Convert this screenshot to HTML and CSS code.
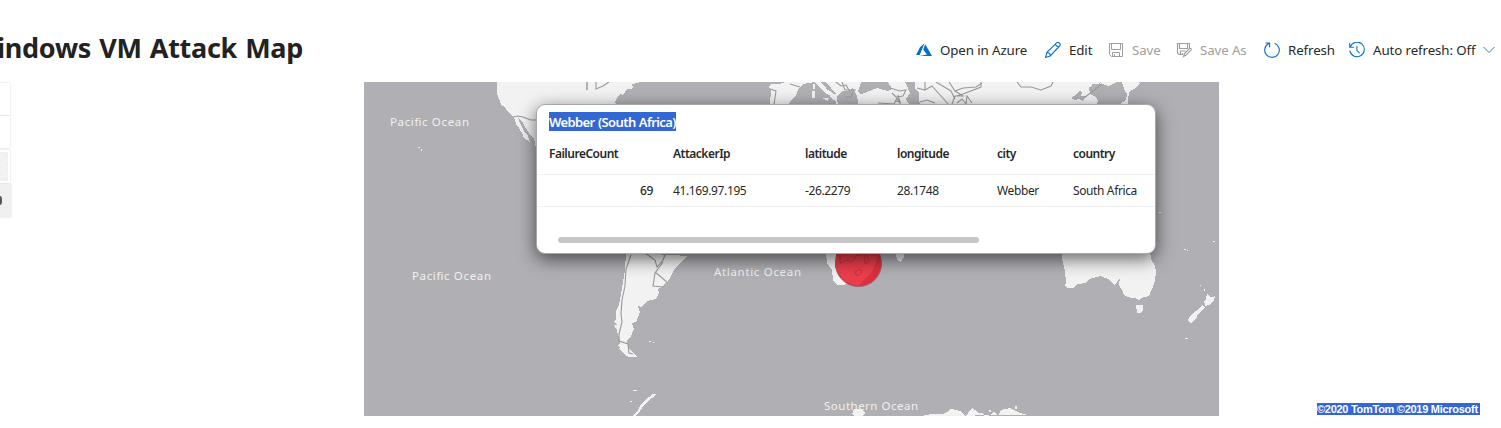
FILE: index.html
```html
<!DOCTYPE html>
<html lang="en">
<head>
<meta charset="utf-8">
<title>Windows VM Attack Map</title>
<link rel="stylesheet" href="styles.css">
</head>
<body>
<header class="header">
  <h1 class="title">Windows VM Attack Map</h1>
  <nav class="toolbar">
    <a class="tool azure"><svg class="icon" viewBox="0 0 16 16"><path fill="#0072c6" d="M8.600 1.300 4 5.200 0 13h3.700zM9.200 2.300 7.200 7.800l3.800 4.700L3.800 14H16z"/></svg><span>Open in Azure</span></a>
    <a class="tool edit"><svg class="icon" viewBox="0 0 16 16"><path fill="none" stroke="#0f72c4" stroke-width="1.100" d="M.6 15.400l1.300-5L11.600.9c1-.8 2.200-.5 3 .3.800.8.800 2 0 2.800L5.200 13.900zM10.200 2.300l3.200 3.200M2 10.500c1.900 0 3.200 1.300 3.200 3.200"/></svg><span>Edit</span></a>
    <a class="tool save off"><svg class="icon" viewBox="0 0 16 16"><path fill="none" stroke="#a19f9d" d="M1.500 1.500h13v13H3.500l-2-2zM3.500 1.500v6h9v-6M4.500 14.500v-4h7v4M6.500 12v2.500"/></svg><span>Save</span></a>
    <a class="tool saveas off"><svg class="icon" viewBox="0 0 16 16"><path fill="none" stroke="#a19f9d" stroke-width="1.150" d="M7 12.500H3L1.500 11V1.500h12V6M3.500 1.500v5h8v-5M4.500 12.500v-3.500h5M6.500 11v1.500M7.500 14.500l1-3L13.500 6.500c1.200-.6 2.200.6 1.500 1.600l-5 5z"/></svg><span>Save As</span></a>
    <a class="tool refresh"><svg class="icon" viewBox="0 0 16 16"><path fill="none" stroke="#0f72c4" stroke-width="1.150" d="M10.500 1.200a7.300 7.300 0 1 1-5.700.3M1.600 1h4v4.200"/></svg><span>Refresh</span></a>
    <a class="tool auto"><svg class="icon" viewBox="0 0 16 16"><path fill="none" stroke="#0f72c4" stroke-width="1.100" d="M1.200 4.800A7.300 7.300 0 1 1 .8 8.600M.7 1v4.200h4.200M7.900 4v4.600l2.800 2.500"/></svg><span>Auto refresh: Off</span><svg class="chevron" viewBox="0 0 12 8"><path fill="none" stroke="#3b7db0" d="M.5 1 6 6.500 11.500 1"/></svg></a>
  </nav>
</header>
<main class="content">
  <div class="controls">
    <div class="ctl"></div>
    <div class="ctl"></div>
    <div class="ctl style"><svg viewBox="0 0 8 29"><path fill="none" stroke="#f8f8f8" stroke-width=".7" d="M0 3l8 5M0 12l8-4M0 17l8 5M2 2v25M5 10v15M0 24h8"/></svg></div>
    <div class="ctl last"><i class="knob"></i></div>
  </div>
  <section class="map">
    <svg class="world" viewBox="364 82 855 334">
      <rect class="sea" x="364" y="82" width="855" height="334"/>
      <g class="land" shape-rendering="crispEdges">
        <path d="M497 82v10l1 5 2 4 1 4 4 2 3 5 3 3 3 2 2 7 3 4 3 5 2 5 6 4-2-6-4-5-3-6-3-7 4 3 3 6 4 6 5 6 2 9 20 20h50l-10-30v-20l21-11-2-5 2-4 3-4 3 1 4-6h4l2-2-1-3 6-1 2-2z"/>
        <path d="M785 82l-6 2h-8l-2 3 2 4-1 13 2 6h323l3-9-3-4 7-2 3-4-4-3-6 1-4-2 2-3 5 2 2-4 4 2 3 3 8-4 8-5z"/>
        <path d="M1089 96l5-1 3 3v5l3 4h-7l-1-5zM1101 82l-2 4h8l3-3 6-1zM1122 82l2 7 3 5-1 6-7 5-1 5 9-1 1-9 1-8 5-3 6-6-3-1zM867 252h22l5 2h9v5l-3 2-3-3v-4z"/>
        <path d="M626 252l-1 18-2 12-2 12-2 11-3 6 0 8-2 3 3 3-3 0 3 5 1 5 2 5 1 6-2 3 5 5 5 3 8 0-5-5-4-5-1-6 4-5 3-7-2-6 4-1 4-10-2-6 3 1 6-6 9-2 3-6-1-4 7-3 5-8 5-10 6-6 7-6z"/>
        <path d="M624 345l-4-2-2 3 4 2zM627 352l3 1 5 2h-7zM649 341h2v1h-2zM653 342h1v1h-1z"/>
        <path d="M826 252l1 11 5 7 1 10 4 5h6l8-2 15-9 12-22zM895 252l3 9 3 1 3-5 1-5z"/>
        <path d="M1062 252l0 7 3 12 1 11-1 4 3 2h5l5-4 7-1 4-4 12-3 9 4 4 5 3-3 3-4-1 7 3 5 2 5 7 3 4 0 4 2 5-3 5-1 3-7 3-8 1-9-1-6-4-7-1-8zM1136 305h7l0 5-2 3h-4zM1207 293l3 4 4 0 2-3-2 6-5 5-4 1 0-3-2-1 3-3zM1202 305l3 2-7 7-2 5-5 4-3-2 1-4 7-6zM1185 338h3v1h-3zM1204 289h1v2h-1zM1200 285h1v1h-1zM1184 249h2v1h-2zM1213 241h2v1h-2zM1187 250h1v1h-1zM1159 212h2v1h-2z"/>
        <path d="M656 394h-3l-8 6-5 6-3 6-5 4h3l5-5 4-6 8-7zM633 390h4v1h-4zM630 401h2v1h-2zM852 414l2-5h8l3 4-2 3h-9zM922 416l9-2h12l4-2 4-3 6 1 5 2 3 4 3-3 4-5 3 2 3 3 5 0 2 4 5-2 4-3 4 4 3-6 9-2 6 3 7 3 6 1zM989 410h2v2h-2zM1015 406h2v3h-2zM418 147h2v1h-2zM421 149h1v2h-1z"/>
      </g>
      <g class="water" shape-rendering="crispEdges">
        <path d="M586 82h2v8h-2zM787 107l4-7 5-5 3-7 4-4 12-2 5 6 6 6 8 2 3 9zM821 82h5l10 12-4 1-6-7zM836 97l6-6 7 0 4-3 4 8 2 11h-20zM858 92l3-10h27l4 7-4 2-11-3-10 4-6 2zM905 82h10l0 6 4 5 0 6 1 5-10 2-4-7 4-6-3-7zM1100 106l-4-9-6-3-1-7 5 0-2-3 10 0 7 2 7 2 3 5-4 5-4 3-3 6zM1071 98l6-4 2-3 3 1-1 4 5 0-3 5-4-2-4 1z"/>
      </g>
      <path class="land" shape-rendering="crispEdges" d="M813 84h2v5h-2zM812 91h3v7h-3zM823 88l7 3 7 7-1 3-5-3-4-7zM822 98h7l-1 3z"/>
      <path class="border" d="M513 117l5-1 5 1 8 3h6M596 82v7l7-3 6-4M770 89l6 2-2 14M790 84l10 3M836 82l5 4 5-1 4 7M842 82l3 8 11 0M845 97h6l2-5M890 88l10 3 6-1-3 6-7 1-4-4M898 95l2 7-4-1M878 103l16 1 3-6 4 7M925 82v8l-8-2M925 90l7-4 17 19M936 82l15 9 4 8M949 82l6 9 8-3 13-1 6-4M953 97l10-3 18-7V82M952 104l3-8 8 0-8-5M957 103l5-4 4 5 1-8 5 7M920 102l7-2 8 3M1017 82l4 5 10 0 10 3 10-4 2-4M1084 98l18-14M631 255l-5 14-1 17-3 14-1 14 1 8-3 12v7l9 3 1 9 4 1M645 253l10 7 2 7 6-7 2-5-6-2M663 262l-8 11-2 13 10 1 4-5-12-10"/>
      <g class="labels">
        <text x="390" y="126" textLength="79">Pacific Ocean</text>
        <text x="412" y="280" textLength="79">Pacific Ocean</text>
        <text x="714" y="276" textLength="87">Atlantic Ocean</text>
        <text x="824" y="410" textLength="94">Southern Ocean</text>
      </g>
      <circle class="hit" cx="858.500" cy="263.500" r="23"/>
      <path class="hitland" d="M836 254h43l-7 18-14 14-14-5-9-14z"/>
      <path class="hitline" d="M840 254v9l7-3 5 2 5-7h4M865 254v10l4-3-2-7M855 272l5-3 2 3-5 4z"/>
    </svg>
    <article class="popup">
      <h2 class="popup-title"><mark>Webber (South Africa)</mark></h2>
      <div class="row head"><span>FailureCount</span><span>AttackerIp</span><span>latitude</span><span>longitude</span><span>city</span><span>country</span></div>
      <div class="row"><span class="count">69</span><span>41.169.97.195</span><span>-26.2279</span><span>28.1748</span><span>Webber</span><span>South Africa</span></div>
      <div class="scroll"></div>
    </article>
  </section>
  <footer class="credit">©2020 TomTom ©2019 Microsoft</footer>
</main>
</body>
</html>
```
FILE: styles.css
```css
* { box-sizing: border-box; }
body { margin: 0; width: 1501px; height: 428px; overflow: hidden; background: #fff; color: #292827; font-family: "Noto Sans", "Open Sans", sans-serif; }
.header { display: flex; justify-content: space-between; height: 82px; padding-top: 28px; }
.title { display: flex; justify-content: flex-end; width: 303px; margin: 0; font-size: 27px; line-height: 40px; font-weight: 700; letter-spacing: -0.300px; word-spacing: 1.500px; white-space: nowrap; color: #222; }
.toolbar { display: flex; width: 585px; height: 44px; align-items: center; }
.tool { display: flex; align-items: center; gap: 8px; flex: none; height: 18px; font-size: 13.300px; line-height: 18px; letter-spacing: -0.100px; white-space: nowrap; }
.icon { width: 16px; height: 16px; flex: none; }
.azure { width: 129px; }
.edit { width: 63px; }
.save { width: 68px; }
.saveas { width: 88px; }
.refresh { width: 85px; }
.auto { width: 152px; }
.off { color: #a19f9d; }
.chevron { width: 12px; height: 8px; flex: none; }
.content { display: flex; height: 346px; }
.controls { width: 11px; margin-right: 353px; padding-top: 1px; }
.ctl { width: 10px; height: 32px; margin-bottom: 1px; background: #fff; box-shadow: 0 0 2px rgba(0, 0, 0, .16); }
.style { height: 33px; margin-top: 2px; padding: 2px 2px 2px 0; }
.style svg { display: block; width: 8px; height: 29px; background: #f0f0f0; }
.last { display: flex; align-items: center; width: 11px; height: 33px; background: #f0f0f0; }
.knob { width: 2px; height: 9px; border-radius: 0 2px 2px 0 / 0 4px 4px 0; background: #555; }
.map { position: relative; width: 855px; height: 334px; overflow: hidden; }
.world { display: block; width: 855px; height: 334px; }
.sea, .water { fill: #b0afb4; }
.land { fill: #f2f2f2; }
.border { fill: none; stroke: #999; stroke-width: 1.100; }
.labels { fill: #f0f0f0; font-size: 11.500px; }
.hit { fill: #dc3040; stroke: #96606c; stroke-width: 1; }
.hitland { fill: #eb3e4b; }
.hitline { fill: none; stroke: #c92d3b; }
.popup { position: absolute; left: 172px; top: 22px; width: 620px; height: 150px; padding-top: 7px; border: 1px solid #a8a8aa; border-radius: 9px; background: #fff; box-shadow: 0 5px 18px rgba(0, 0, 0, .6); }
.popup-title { height: 19px; margin: 0 0 0 12px; font-size: 13px; line-height: 21px; font-weight: 600; letter-spacing: -0.600px; word-spacing: 0.500px; }
mark { display: inline-block; height: 19px; background: #3367d1; color: #fff; white-space: nowrap; }
.row { display: grid; grid-template-columns: 124px 132px 92px 100px 76px 80px; align-items: center; height: 32px; padding-left: 12px; border-bottom: 1px solid #f1f1f1; font-size: 12px; letter-spacing: -0.380px; white-space: nowrap; }
.head { height: 44px; padding-top: 1px; font-weight: 600; letter-spacing: -0.500px; }
.count { padding-right: 20px; text-align: right; font-weight: 500; }
.scroll { width: 421px; height: 6px; margin: 30px 0 0 21px; border-radius: 3px; background: #c6c6c6; }
.credit { align-self: flex-start; height: 12px; margin: 321px 0 0 98px; background: #3367d1; color: #fff; font: 700 11px/12px "Liberation Sans", Arial, sans-serif; letter-spacing: -0.280px; white-space: nowrap; padding-right: 2px; }
```
